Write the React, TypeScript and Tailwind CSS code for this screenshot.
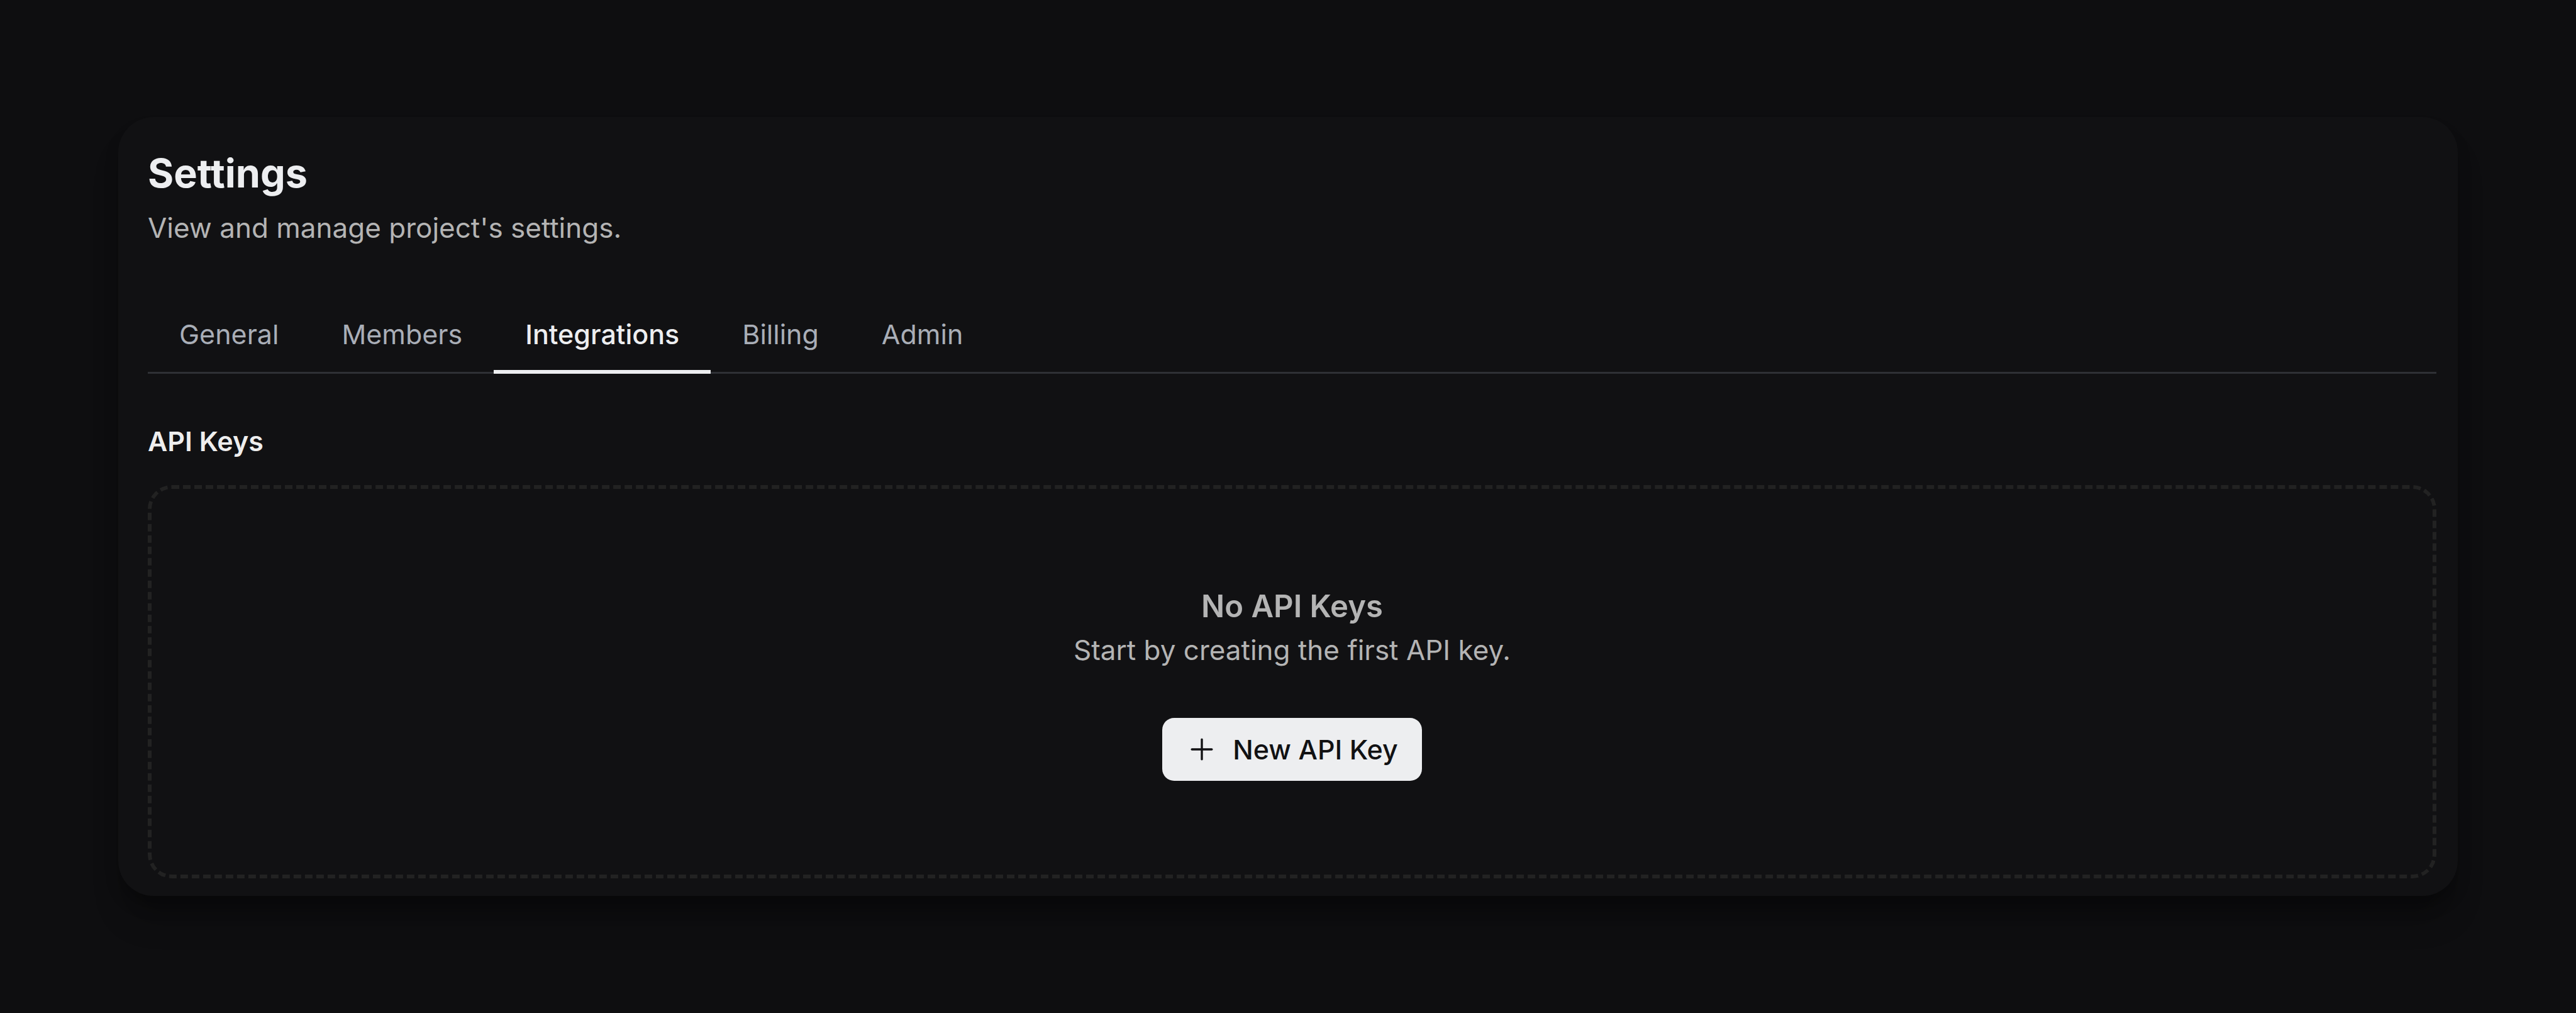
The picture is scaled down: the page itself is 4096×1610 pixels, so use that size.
import { useState } from "react";

const TABS = ["General", "Members", "Integrations", "Billing", "Admin"];

function PlusIcon() {
  return (
    <svg viewBox="0 0 15 15" fill="currentColor" aria-hidden="true" className="size-[50px]">
      <path
        fillRule="evenodd"
        clipRule="evenodd"
        d="M8 2.75C8 2.47386 7.77614 2.25 7.5 2.25C7.22386 2.25 7 2.47386 7 2.75V7H2.75C2.47386 7 2.25 7.22386 2.25 7.5C2.25 7.77614 2.47386 8 2.75 8H7V12.25C7 12.5261 7.22386 12.75 7.5 12.75C7.77614 12.75 8 12.5261 8 12.25V8H12.25C12.5261 8 12.75 7.77614 12.75 7.5C12.75 7.22386 12.5261 7 12.25 7H8V2.75Z"
      />
    </svg>
  );
}

function Tabs() {
  const [active, setActive] = useState("Integrations");
  return (
    <div role="tablist" className="mt-[75px] flex border-b-3 border-[#2e3035]">
      {TABS.map((tab) => (
        <button
          key={tab}
          role="tab"
          type="button"
          aria-selected={tab === active}
          onClick={() => setActive(tab)}
          className={
            tab === active
              ? "-mb-[3px] h-[126px] border-b-6 border-[#edeef0] px-[50px] pt-[6px] font-medium text-[#edeef0]"
              : "-mb-[3px] h-[126px] border-b-6 border-transparent px-[50px] pt-[6px] text-[#a9aeb7]"
          }
        >
          {tab}
        </button>
      ))}
    </div>
  );
}

export default function App() {
  return (
    <div className="min-h-screen bg-[#0e0e10] px-[188px] py-[186px] font-['Inter',sans-serif] text-[43px] leading-[62px] text-[#b4b4b4]">
      <main className="rounded-[56px] bg-[#111113] pt-[46px] pr-[34px] pb-[28px] pl-[47px] shadow-[0_46px_50px_-12px_rgb(0_0_0/0.25),0_18px_24px_-4px_rgb(0_0_0/0.25)]">
        <h1 className="text-[63px] leading-[87px] font-bold text-[#edeef0]">Settings</h1>
        <p className="mt-[12px] text-[44px] leading-[62px]">View and manage project's settings.</p>
        <Tabs />
        <section>
          <h2 className="mt-[76px] font-semibold text-[#eeeeee]">API Keys</h2>
          <div className="mt-[39px] flex flex-col items-center rounded-[38px] border-6 border-dashed border-[#222222] py-[149px]">
            <h3 className="text-[49px] leading-[76px] font-semibold">No API Keys</h3>
            <p className="text-[44px] leading-[62px]">Start by creating the first API key.</p>
            <button
              type="button"
              className="mt-[77px] flex h-[100px] items-center gap-[24px] rounded-[19px] bg-[#edeef0] px-[38px] font-medium text-[#111113]"
            >
              <PlusIcon />
              New API Key
            </button>
          </div>
        </section>
      </main>
    </div>
  );
}
